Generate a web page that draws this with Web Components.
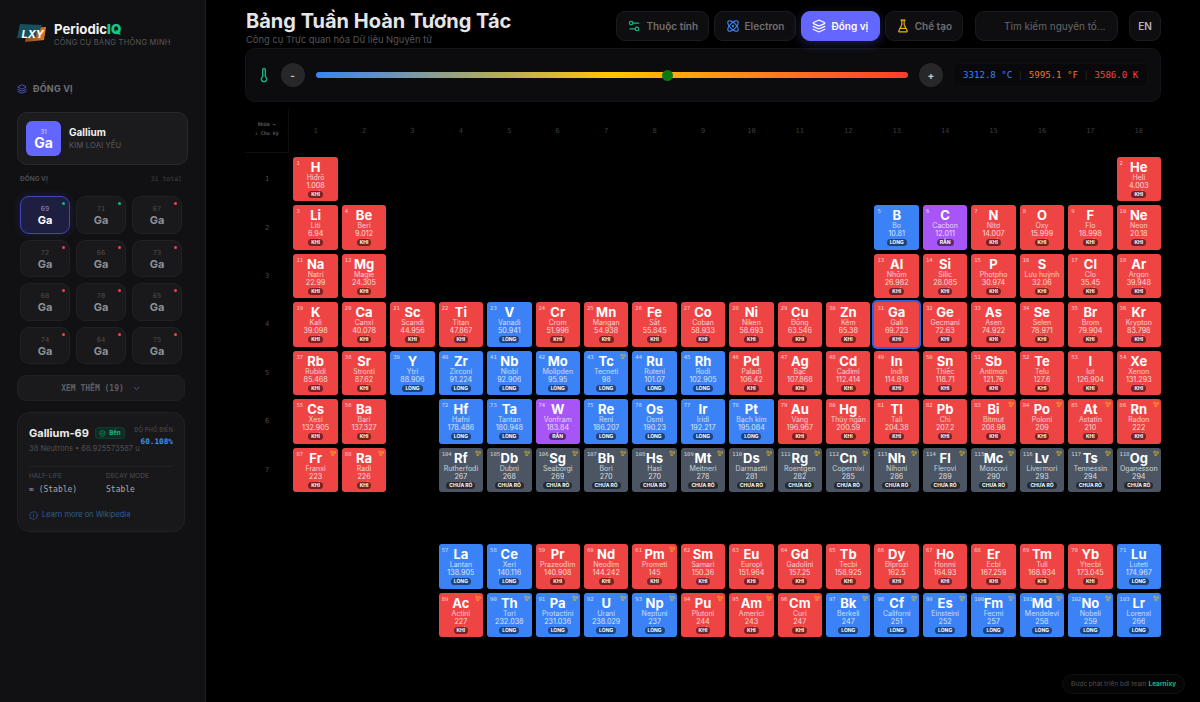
<!DOCTYPE html>
<html lang="vi">
<head>
<meta charset="utf-8">
<title>PeriodicIQ</title>
<style>
html,body{margin:0;height:702px;overflow:hidden;background:#000;font-family:Inter,"Noto Sans",sans-serif;}
</style>
</head>
<body>
<pt-app></pt-app>
<script>
const ICONS={
 layers:'<path d="M12.83 2.18a2 2 0 0 0-1.66 0L2.6 6.08a1 1 0 0 0 0 1.83l8.58 3.91a2 2 0 0 0 1.66 0l8.58-3.9a1 1 0 0 0 0-1.83Z"/><path d="m22 17.65-9.17 4.16a2 2 0 0 1-1.66 0L2 17.65"/><path d="m22 12.65-9.17 4.16a2 2 0 0 1-1.66 0L2 12.65"/>',
 atom:'<circle cx="12" cy="12" r="1"/><path d="M20.2 20.2c2.04-2.03.02-7.36-4.5-11.9-4.54-4.52-9.87-6.54-11.9-4.5-2.04 2.03-.02 7.36 4.5 11.9 4.54 4.52 9.87 6.54 11.9 4.5Z"/><path d="M15.7 15.7c4.52-4.54 6.54-9.87 4.5-11.9-2.03-2.04-7.36-.02-11.9 4.5-4.52 4.54-6.54 9.87-4.5 11.9 2.03 2.04 7.36.02 11.9-4.5Z"/>',
 flask:'<path d="M10 2v7.527a2 2 0 0 1-.211.896L4.72 20.55a1 1 0 0 0 .9 1.45h12.76a1 1 0 0 0 .9-1.45l-5.069-10.127A2 2 0 0 1 14 9.527V2"/><path d="M8.5 2h7"/><path d="M7 16h10"/>',
 settings:'<path d="M20 7h-9"/><path d="M14 17H5"/><circle cx="17" cy="17" r="3"/><circle cx="7" cy="7" r="3"/>',
 thermo:'<path d="M14 4v10.54a4 4 0 1 1-4 0V4a2 2 0 0 1 4 0Z"/>',
 chevron:'<path d="m6 9 6 6 6-6"/>',
 info:'<circle cx="12" cy="12" r="10"/><path d="M12 16v-4"/><path d="M12 8h.01"/>',
 shield:'<path d="M20 13c0 5-3.5 7.5-7.66 8.95a1 1 0 0 1-.67-.01C7.5 20.5 4 18 4 13V6a1 1 0 0 1 1-1c2 0 4.5-1.2 6.24-2.72a1.17 1.17 0 0 1 1.52 0C14.51 3.81 17 5 19 5a1 1 0 0 1 1 1z"/><path d="m9 12 2 2 4-4"/>',
 rad:'<path d="M12 12h.01"/><path d="M7.5 4.2c-.3-.5-.9-.7-1.3-.4C3.9 5.5 2.3 8.1 2 11c-.1.5.4 1 1 1h5c0-1.5.8-2.8 2-3.4-1.1-1.9-2-3.5-2.5-4.4z"/><path d="M21 12c.6 0 1-.4 1-1-.3-2.9-1.8-5.5-4.1-7.1-.4-.3-1.1-.2-1.3.3-.6.9-1.5 2.5-2.6 4.3 1.2.7 2 2 2 3.5h5z"/><path d="M7.5 19.8c-.3.5-.1 1.1.4 1.3 2.6 1.2 5.6 1.2 8.2 0 .5-.2.7-.8.4-1.3-.5-.9-1.4-2.5-2.5-4.3-1.2.7-2.8.7-4 0-1.1 1.8-2 3.4-2.5 4.3z"/>'
};
const svg=(n,s,c,w=2)=>`<svg width="${s}" height="${s}" viewBox="0 0 24 24" fill="none" stroke="${c}" stroke-width="${w}" stroke-linecap="round" stroke-linejoin="round" style="display:block;flex:none">${ICONS[n]}</svg>`;
const MONO='"DejaVu Sans Mono","Liberation Mono",monospace';

class Base extends HTMLElement{
  constructor(){super();this.attachShadow({mode:'open'});}
}
class PtCell extends Base{
  connectedCallback(){
    const a=k=>this.getAttribute(k);
    const st={k:['KHÍ','#ef4444'],l:['LỎNG','#3b82f6'],r:['RẮN','#a855f7'],u:['CHƯA RÕ','#4b5563']}[a('st')];
    this.shadowRoot.innerHTML=`<style>
:host{display:block;aspect-ratio:1;min-width:0;position:relative;border-radius:3px;background:${st[1]};color:#fff;overflow:visible;text-align:center;${this.hasAttribute('sel')?'box-shadow:0 0 0 2px #2563eb;z-index:2;':''}}
.n{position:absolute;left:3px;top:3px;font:5.5px/7px ${MONO};opacity:.72}
.rad{position:absolute;right:2px;top:2px;opacity:.8}
.wrap{display:flex;flex-direction:column;align-items:center;padding-top:3px;height:100%;box-sizing:border-box;overflow:hidden}
.s{font-size:13px;font-weight:700;line-height:15px;height:15px}
.nm{font-size:7px;line-height:8px;height:8px;margin-top:-1px;white-space:nowrap;opacity:.72;}
.m{font-size:7.2px;line-height:8px;height:7px;overflow:hidden;white-space:nowrap;opacity:.8;}
.p{margin-top:2px;font-size:5px;font-weight:700;line-height:7px;height:7px;padding:0 3px;border-radius:4px;background:rgba(0,0,0,.5);white-space:nowrap}
</style><span class="n">${a('n')}</span>${this.hasAttribute('rad')?`<span class="rad">${svg('rad',6,'#facc15',2.6)}</span>`:''}
<div class="wrap"><div class="s">${a('s')}</div><div class="nm">${a('name')}</div><div class="m">${a('m')}</div><div class="p">${st[0]}</div></div>`;
  }
}
customElements.define('pt-cell',PtCell);

const D=[
[1,1,'H','Hiđrô','1.008','k'],[1,18,'He','Heli','4.003','k'],
[2,1,'Li','Liti','6.94','k'],[2,2,'Be','Beri','9.012','k'],[2,13,'B','Bo','10.81','l'],[2,14,'C','Cacbon','12.011','r'],[2,15,'N','Nitơ','14.007','k'],[2,16,'O','Oxy','15.999','k'],[2,17,'F','Flo','18.998','k'],[2,18,'Ne','Neon','20.18','k'],
[3,1,'Na','Natri','22.99','k'],[3,2,'Mg','Magie','24.305','k'],[3,13,'Al','Nhôm','26.982','k'],[3,14,'Si','Silic','28.085','k'],[3,15,'P','Photpho','30.974','k'],[3,16,'S','Lưu huỳnh','32.06','k'],[3,17,'Cl','Clo','35.45','k'],[3,18,'Ar','Argon','39.948','k'],
[4,1,'K','Kali','39.098','k'],[4,2,'Ca','Canxi','40.078','k'],[4,3,'Sc','Scandi','44.956','k'],[4,4,'Ti','Titan','47.867','k'],[4,5,'V','Vanadi','50.941','l'],[4,6,'Cr','Crom','51.996','k'],[4,7,'Mn','Mangan','54.938','k'],[4,8,'Fe','Sắt','55.845','k'],[4,9,'Co','Coban','58.933','k'],[4,10,'Ni','Niken','58.693','k'],[4,11,'Cu','Đồng','63.546','k'],[4,12,'Zn','Kẽm','65.38','k'],[4,13,'Ga','Gali','69.723','k'],[4,14,'Ge','Gecmani','72.63','k'],[4,15,'As','Asen','74.922','k'],[4,16,'Se','Selen','78.971','k'],[4,17,'Br','Brom','79.904','k'],[4,18,'Kr','Krypton','83.798','k'],
[5,1,'Rb','Rubidi','85.468','k'],[5,2,'Sr','Stronti','87.62','k'],[5,3,'Y','Ytri','88.906','l'],[5,4,'Zr','Zirconi','91.224','l'],[5,5,'Nb','Niobi','92.906','l'],[5,6,'Mo','Molipden','95.95','l'],[5,7,'Tc','Tecneti','98','l',1],[5,8,'Ru','Ruteni','101.07','l'],[5,9,'Rh','Rodi','102.905','l'],[5,10,'Pd','Paladi','106.42','k'],[5,11,'Ag','Bạc','107.868','k'],[5,12,'Cd','Cadimi','112.414','k'],[5,13,'In','Indi','114.818','k'],[5,14,'Sn','Thiếc','118.71','k'],[5,15,'Sb','Antimon','121.76','k'],[5,16,'Te','Telu','127.6','k'],[5,17,'I','Iot','126.904','k'],[5,18,'Xe','Xenon','131.293','k'],
[6,1,'Cs','Xesi','132.905','k'],[6,2,'Ba','Bari','137.327','k'],[6,4,'Hf','Hafni','178.486','l'],[6,5,'Ta','Tantan','180.948','l'],[6,6,'W','Vonfram','183.84','r'],[6,7,'Re','Reni','186.207','l'],[6,8,'Os','Osmi','190.23','l'],[6,9,'Ir','Iridi','192.217','l'],[6,10,'Pt','Bạch kim','195.084','l'],[6,11,'Au','Vàng','196.967','k'],[6,12,'Hg','Thủy ngân','200.59','k'],[6,13,'Tl','Tali','204.38','k'],[6,14,'Pb','Chì','207.2','k'],[6,15,'Bi','Bitmut','208.98','k',1],[6,16,'Po','Poloni','209','k',1],[6,17,'At','Astatin','210','k',1],[6,18,'Rn','Radon','222','k',1],
[7,1,'Fr','Franxi','223','k',1],[7,2,'Ra','Radi','226','k',1],[7,4,'Rf','Rutherfodi','267','u',1],[7,5,'Db','Dubni','268','u',1],[7,6,'Sg','Seaborgi','269','u',1],[7,7,'Bh','Bori','270','u',1],[7,8,'Hs','Hasi','270','u',1],[7,9,'Mt','Meitneri','278','u',1],[7,10,'Ds','Darmastti','281','u',1],[7,11,'Rg','Roentgen','282','u',1],[7,12,'Cn','Copernixi','285','u',1],[7,13,'Nh','Nihoni','286','u',1],[7,14,'Fl','Flerovi','289','u',1],[7,15,'Mc','Moscovi','290','u',1],[7,16,'Lv','Livermori','293','u',1],[7,17,'Ts','Tennessin','294','u',1],[7,18,'Og','Oganesson','294','u',1],
];
const LA=[['La','Lantan','138.905','l'],['Ce','Xeri','140.116','l'],['Pr','Prazeođim','140.908','k'],['Nd','Neođim','144.242','k'],['Pm','Prometi','145','k',1],['Sm','Samari','150.36','k'],['Eu','Europi','151.964','k'],['Gd','Gadolini','157.25','k'],['Tb','Tecbi','158.925','k'],['Dy','Điprozi','162.5','k'],['Ho','Honmi','164.93','k'],['Er','Ecbi','167.259','k'],['Tm','Tuli','168.934','k'],['Yb','Ytecbi','173.045','k'],['Lu','Luteti','174.967','l']];
const AC=[['Ac','Actini','227','k',1],['Th','Tori','232.038','l',1],['Pa','Protactini','231.036','l',1],['U','Urani','238.029','l',1],['Np','Neptuni','237','l',1],['Pu','Plutoni','244','k',1],['Am','Americi','243','k',1],['Cm','Curi','247','k',1],['Bk','Berkeli','247','l',1],['Cf','Californi','251','l',1],['Es','Einsteini','252','l',1],['Fm','Fecmi','257','l',1],['Md','Mendelevi','258','l',1],['No','Nobeli','259','l',1],['Lr','Lorenxi','266','l',1]];
const NUM={};
['H','He','Li','Be','B','C','N','O','F','Ne','Na','Mg','Al','Si','P','S','Cl','Ar','K','Ca','Sc','Ti','V','Cr','Mn','Fe','Co','Ni','Cu','Zn','Ga','Ge','As','Se','Br','Kr','Rb','Sr','Y','Zr','Nb','Mo','Tc','Ru','Rh','Pd','Ag','Cd','In','Sn','Sb','Te','I','Xe','Cs','Ba','La','Ce','Pr','Nd','Pm','Sm','Eu','Gd','Tb','Dy','Ho','Er','Tm','Yb','Lu','Hf','Ta','W','Re','Os','Ir','Pt','Au','Hg','Tl','Pb','Bi','Po','At','Rn','Fr','Ra','Ac','Th','Pa','U','Np','Pu','Am','Cm','Bk','Cf','Es','Fm','Md','No','Lr','Rf','Db','Sg','Bh','Hs','Mt','Ds','Rg','Cn','Nh','Fl','Mc','Lv','Ts','Og'].forEach((s,i)=>NUM[s]=i+1);

class PtTable extends Base{
  connectedCallback(){
    let h=`<style>
:host{display:grid;grid-template-columns:repeat(19,minmax(0,1fr));gap:4px;margin-top:6.6px}
.corner{aspect-ratio:1;grid-row:1;grid-column:1;display:flex;flex-direction:column;align-items:center;justify-content:center;font:700 5px/9px ${MONO};color:#555;border-right:1px solid #0f0f10;border-bottom:1px solid #0f0f10;box-sizing:border-box;padding-bottom:3px}
.g,.per{display:flex;align-items:center;justify-content:center;font:7px ${MONO};color:#3c3c3f}
.per{color:#4a4a4d}
.sp{aspect-ratio:1;grid-row:9;grid-column:1}
</style><div class="corner"><span>Nhóm →</span><span>↓ Chu kỳ</span></div>`;
    for(let g=1;g<=18;g++)h+=`<div class="g" style="grid-row:1;grid-column:${g+1}">${g}</div>`;
    for(let p=1;p<=7;p++)h+=`<div class="per" style="grid-row:${p+1};grid-column:1">${p}</div>`;
    h+='<div class="sp"></div>';
    const cell=(r,c,d,sel)=>`<pt-cell style="grid-row:${r};grid-column:${c}" n="${NUM[d[0]]}" s="${d[0]}" name="${d[1]}" m="${d[2]}" st="${d[3]}" ${d[4]?'rad':''} ${sel?'sel':''}></pt-cell>`;
    D.forEach(d=>{h+=cell(d[0]+1,d[1]+1,d.slice(2),d[2]==='Ga');});
    LA.forEach((d,i)=>{h+=cell(10,i+5,d);});
    AC.forEach((d,i)=>{h+=cell(11,i+5,d);});
    this.shadowRoot.innerHTML=h;
  }
}
customElements.define('pt-table',PtTable);

class PtTab extends Base{
  connectedCallback(){
    const on=this.hasAttribute('active');
    this.shadowRoot.innerHTML=`<style>
:host{display:flex;align-items:center;gap:5px;height:30px;box-sizing:border-box;padding:0 ${this.getAttribute('pad')||'10px'};border-radius:9px;border:1px solid ${on?'#6366ff':'#1b1b1e'};background:${on?'#6366ff':'#0e0e10'};color:${on?'#fff':'#6f6f73'};font-size:10px;font-weight:600;white-space:nowrap;${on?'box-shadow:0 3px 12px rgba(99,102,255,.3);':''}}
</style>${svg(this.getAttribute('icon'),14,this.getAttribute('color'))}<slot></slot>`;
  }
}
customElements.define('pt-tab',PtTab);

class PtHeader extends Base{
  connectedCallback(){
    this.shadowRoot.innerHTML=`<style>
:host{display:flex;justify-content:space-between;align-items:flex-start;padding-top:11px;height:41px;box-sizing:border-box}
h1{margin:0 0 0 1px;font-size:20px;line-height:21px;font-weight:700;color:#e5e5e7;white-space:nowrap}
p{margin:2px 0 0 1px;font-size:9.4px;line-height:12px;color:#555558;white-space:nowrap}
.r{display:flex;align-items:center}
.tabs{display:flex;gap:5px}
.search{margin-left:12px;width:143px;height:30px;box-sizing:border-box;border:1px solid #1b1b1e;border-radius:9px;background:#0e0e10;color:#666669;font-size:10px;padding-left:28px;display:flex;align-items:center;white-space:nowrap}
.en{margin-left:11px;width:32px;height:30px;box-sizing:border-box;border:1px solid #1b1b1e;border-radius:9px;background:#0e0e10;color:#b5b5b8;font-size:10px;font-weight:600;display:flex;align-items:center;justify-content:center}
</style><div><h1>Bảng Tuần Hoàn Tương Tác</h1><p>Công cụ Trực quan hóa Dữ liệu Nguyên tử</p></div>
<div class="r"><div class="tabs">
<pt-tab icon="settings" color="#10b981">Thuộc tính</pt-tab>
<pt-tab icon="atom" color="#3b82f6" pad="10.5px">Electron</pt-tab>
<pt-tab icon="layers" color="#fff" pad="10.5px" active>Đồng vị</pt-tab>
<pt-tab icon="flask" color="#eab308">Chế tạo</pt-tab>
</div><div class="search">Tìm kiếm nguyên tố...</div><div class="en">EN</div></div>`;
  }
}
customElements.define('pt-header',PtHeader);

class PtTemp extends Base{
  connectedCallback(){
    this.shadowRoot.innerHTML=`<style>
:host{display:flex;align-items:center;height:54px;box-sizing:border-box;margin-top:7px;padding:0 12px 0 10px;background:#0c0c0e;border:1px solid #141416;border-radius:10px}
.ic{margin-right:8.5px;flex:none}
.b{width:24px;height:24px;border-radius:50%;background:#27272a;color:#c8c8c8;font-size:10px;font-weight:700;display:flex;align-items:center;justify-content:center;flex:none}
.t{flex:1;height:6px;border-radius:3px;margin:0 11px;position:relative;background:linear-gradient(90deg,#3b82f6,#ffc800 50%,#ff3b30)}
.th{position:absolute;left:346.5px;top:-2.5px;width:11px;height:11px;border-radius:50%;background:#0b7a16}
.read{margin-left:10px;width:195px;height:24px;box-sizing:border-box;padding-left:9px;border-radius:6px;background:#09090b;border:1px solid #101012;display:flex;align-items:center;font:9.1px ${MONO};white-space:pre}
i{font-style:normal;color:#2a2a2d}
</style><span class="ic">${svg('thermo',16,'#10b981')}</span><span class="b">-</span><div class="t"><span class="th"></span></div><span class="b">+</span>
<div class="read"><span style="color:#3b82f6">3312.8 °C</span><i> | </i><span style="color:#f97316">5995.1 °F</span><i> | </i><span style="color:#ef4444">3586.0 K</span></div>`;
  }
}
customElements.define('pt-temp',PtTemp);

class PtIso extends Base{
  connectedCallback(){
    const on=this.hasAttribute('active');
    this.shadowRoot.innerHTML=`<style>
:host{display:flex;flex-direction:column;align-items:center;position:relative;height:37.5px;box-sizing:border-box;padding-top:8px;border-radius:9px;border:1px solid ${on?'#4343bd':'#212124'};background:${on?'#1e1e40':'#19191c'};${on?'box-shadow:0 0 10px rgba(70,70,200,.25);':''}}
.n{font:7px/9px ${MONO};color:${on?'#8a8ad8':'#4c4c50'}}
.s{font-size:11px;line-height:13px;font-weight:700;color:${on?'#fff':'#8f8f93'}}
.d{position:absolute;right:4px;top:5px;width:3px;height:3px;border-radius:50%;background:${this.getAttribute('dot')}}
</style><span class="d"></span><span class="n">${this.getAttribute('n')}</span><span class="s">Ga</span>`;
  }
}
customElements.define('pt-iso',PtIso);

class PtLogo extends Base{
  connectedCallback(){
    this.shadowRoot.innerHTML=`<style>:host{display:block;width:29px;height:18px;flex:none}svg{display:block}</style>
<svg width="29" height="18" viewBox="0 0 29 18"><defs><linearGradient id="o" x1="0" x2="1"><stop offset="0" stop-color="#8a4a20"/><stop offset="1" stop-color="#e0762a"/></linearGradient></defs>
<polygon points="10,4 29,3 27,16 8,18" fill="url(#o)"/><polygon points="3,0 25,1 23,6 20,6 19,13 0,14" fill="#17505c"/>
<text x="4.5" y="14" font-family="Inter,sans-serif" font-size="11" font-weight="700" font-style="italic" fill="#fff">LXY</text></svg>`;
  }
}
customElements.define('pt-logo',PtLogo);

class PtSidebar extends Base{
  connectedCallback(){
    const iso=[[69,'#10b981',1],[71,'#10b981'],[67,'#f43f5e'],[72,'#f43f5e'],[66,'#f43f5e'],[73,'#f43f5e'],[68,'#f43f5e'],[70,'#f43f5e'],[65,'#f43f5e'],[74,'#f43f5e'],[64,'#f43f5e'],[75,'#f43f5e']];
    this.shadowRoot.innerHTML=`<style>
:host{display:block;width:206px;flex:none;box-sizing:border-box;height:702px;background:#111113;border-right:1px solid #1f1f22;padding:24px 20px 0 17px;color:#fff}
.brand{display:flex;gap:8px;align-items:flex-start}
.bt{font-size:13.2px;line-height:16px;font-weight:700;margin-top:-3px;color:#f2f2f2}.bt b{color:#10c98f}
.bs{font-size:7.5px;line-height:10px;letter-spacing:.26px;color:#58585c;margin-top:1px;white-space:nowrap}
.sec{display:flex;align-items:center;gap:6px;margin-top:35px;font-size:9px;line-height:12px;font-weight:700;color:#707074;letter-spacing:.2px}
.card{margin-top:17px;height:53px;width:171px;box-sizing:border-box;border-radius:10px;background:#1b1b1e;border:1px solid #29292c;padding:8px;display:flex;gap:8px;align-items:center}
.tile{width:35px;height:35px;border-radius:6px;background:#6366ff;display:flex;flex-direction:column;align-items:center;justify-content:center;flex:none}
.tile span{font-size:6px;line-height:7px;opacity:.75}.tile b{font-size:14px;line-height:15px}
.cn{font-size:10px;line-height:13px;font-weight:700;color:#f0f0f0}
.cs{font-size:7.5px;line-height:11px;letter-spacing:.2px;color:#5c5c60;margin-top:1px;white-space:nowrap}
.lh{display:flex;justify-content:space-between;margin:10px 3px 0 3px;font-size:6.5px;line-height:9px;font-weight:700;color:#4c4c50}
.lh span:last-child{font:6.5px/9px ${MONO};color:#3f3f43}
.grid{display:grid;grid-template-columns:repeat(3,1fr);gap:6px;margin:12px 3px 0 3px}
.more{margin-top:11px;width:168px;height:26px;box-sizing:border-box;border-radius:9px;background:#1a1a1d;border:1px solid #202023;display:flex;align-items:center;justify-content:center;gap:8px;font:700 8px ${MONO};color:#5f5f63}
.info{margin-top:11px;width:168px;height:120px;box-sizing:border-box;border-radius:12px;background:#18181a;border:1px solid #212124;padding:11px 11px 0 11px}
.top{display:flex;justify-content:space-between;align-items:flex-start;height:36px}
.nm{display:flex;align-items:center;gap:6px;font-size:11px;font-weight:700;color:#eee;line-height:16px;margin-top:1px;white-space:nowrap}
.bd{display:flex;align-items:center;justify-content:center;gap:3px;width:30px;height:12px;border-radius:3px;background:#0e2e25;border:1px solid #123a2f;box-sizing:border-box;font-size:6px;font-weight:700;color:#10b981;flex:none}
.ab{text-align:right;font-size:6px;line-height:9px;color:#4d4d51;white-space:nowrap;margin-top:1px}
.ab b{display:block;font:700 7.7px/12px ${MONO};color:#3f8fe8;margin-top:2px}
.sub{font-size:7.5px;line-height:10px;color:#505054;white-space:nowrap;margin-top:-16px}
.hr{height:1px;background:#202023;margin-top:12px}
.cols{display:flex;margin-top:5px}
.col1{flex:0 0 77px}
.lb{font-size:6.5px;line-height:9px;color:#4d4d51;}
.vl{font:8px/13px ${MONO};color:#a6a6aa;margin-top:2px;white-space:pre}
.lk{display:flex;align-items:center;gap:4px;margin-top:14px;font-size:7.5px;line-height:10px;color:#2a5f99;white-space:nowrap}
</style>
<div class="brand"><pt-logo></pt-logo><div><div class="bt">Periodic<b>IQ</b></div><div class="bs">CÔNG CỤ BẢNG THÔNG MINH</div></div></div>
<div class="sec">${svg('layers',10,'#5a5fd8')}<span>ĐỒNG VỊ</span></div>
<div class="card"><div class="tile"><span>31</span><b>Ga</b></div><div><div class="cn">Gallium</div><div class="cs">KIM LOẠI YẾU</div></div></div>
<div class="lh"><span>ĐỒNG VỊ</span><span>31 total</span></div>
<div class="grid">${iso.map(i=>`<pt-iso n="${i[0]}" dot="${i[1]}" ${i[2]?'active':''}></pt-iso>`).join('')}</div>
<div class="more"><span>XEM THÊM (19)</span>${svg('chevron',9,'#5a5fd8')}</div>
<div class="info"><div class="top"><div class="nm">Gallium-69<span class="bd">${svg('shield',7,'#10b981')}Bền</span></div><div class="ab">ĐỘ PHỔ BIẾN<b>60.108%</b></div></div>
<div class="sub">38 Neutrons • 68.925573587 u</div><div class="hr"></div>
<div class="cols"><div class="col1"><div class="lb">HALF-LIFE</div><div class="vl">∞ (Stable)</div></div><div><div class="lb">DECAY MODE</div><div class="vl">Stable</div></div></div>
<div class="lk">${svg('info',9,'#2a5f99')}<span>Learn more on Wikipedia</span></div></div>`;
  }
}
customElements.define('pt-sidebar',PtSidebar);

class PtApp extends Base{
  connectedCallback(){
    this.shadowRoot.innerHTML=`<style>
:host{display:flex;width:1200px;height:702px;position:relative;overflow:hidden;background:#000;font-family:Inter,"Noto Sans",sans-serif}
main{flex:1;min-width:0;box-sizing:border-box;padding:0 39px}
.foot{position:absolute;left:1062px;top:674px;width:123px;height:20px;box-sizing:border-box;border:1px solid #111113;border-radius:10px;background:#050505;font-size:6.5px;color:#4f4f53;display:flex;align-items:center;justify-content:center;white-space:nowrap}
.foot b{color:#10b981;margin-left:2px}
</style><pt-sidebar></pt-sidebar><main><pt-header></pt-header><pt-temp></pt-temp><pt-table></pt-table></main>
<div class="foot">Được phát triển bởi team <b>Learnixy</b></div>`;
  }
}
customElements.define('pt-app',PtApp);
</script>
</body>
</html>
